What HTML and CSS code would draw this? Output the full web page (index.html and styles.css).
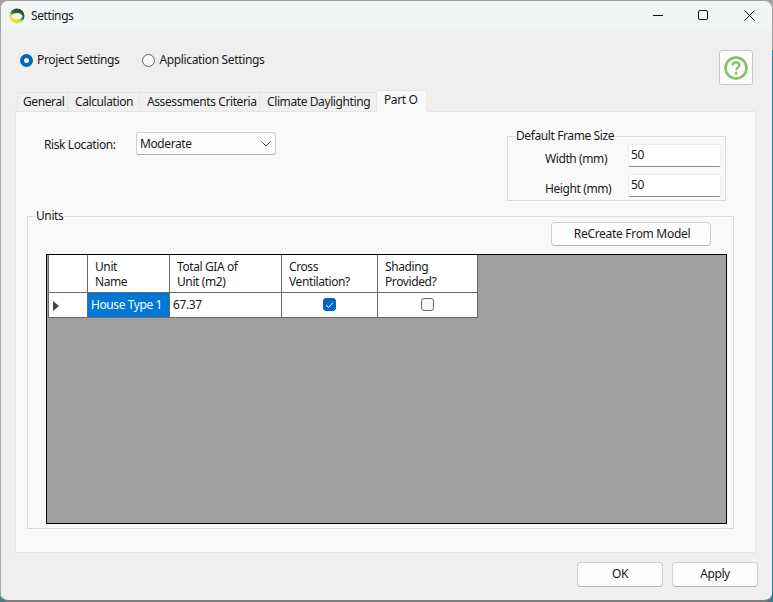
FILE: index.html
```html
<!DOCTYPE html>
<html lang="en">
<head>
<meta charset="utf-8">
<title>Settings</title>
<link rel="stylesheet" href="styles.css">
</head>
<body>
<div class="window">
  <header class="titlebar">
    <svg class="logo" width="16" height="16" viewBox="0 0 16 16">
      <defs>
        <linearGradient id="lg" x1="0.15" y1="0.95" x2="0.7" y2="0.05">
          <stop offset="0" stop-color="#f6f02c"/>
          <stop offset="0.38" stop-color="#d4d838"/>
          <stop offset="0.62" stop-color="#2f6b3c"/>
          <stop offset="1" stop-color="#174a2e"/>
        </linearGradient>
      </defs>
      <circle cx="8" cy="8" r="7.5" fill="url(#lg)"/>
      <ellipse cx="8" cy="8.2" rx="5.4" ry="3.2" fill="#f4f6ee"/>
    </svg>
    <span class="title">Settings</span>
    <div class="controls">
      <svg width="11" height="11" viewBox="0 0 11 11"><path d="M1 5.5H11" stroke="#111" fill="none"/></svg>
      <svg width="11" height="11" viewBox="0 0 11 11"><rect x="0.5" y="0.5" width="9" height="9" rx="1.5" stroke="#111" fill="none"/></svg>
      <svg width="11" height="11" viewBox="0 0 11 11"><path d="M0.5 0.5L10.5 10.5M10.5 0.5L0.5 10.5" stroke="#111" fill="none"/></svg>
    </div>
  </header>
  <main class="body">
    <div class="top">
      <label class="radio"><span class="dot on"></span>Project Settings</label>
      <label class="radio second"><span class="dot"></span>Application Settings</label>
      <button class="help" aria-label="Help">
        <svg width="28" height="28" viewBox="0 0 28 28">
          <circle cx="14" cy="14" r="10.5" fill="none" stroke="#7ec262" stroke-width="2.6"/>
          <path d="M10.6 11.4C10.7 9.4 12.2 8.3 14 8.3C16 8.3 17.4 9.5 17.4 11.2C17.4 13.4 14.2 13.7 14.2 16.2" fill="none" stroke="#7ec262" stroke-width="2.2"/>
          <circle cx="14.2" cy="19.2" r="1.4" fill="#7ec262"/>
        </svg>
      </button>
    </div>
    <nav class="tabs">
      <span class="tab t1">General</span>
      <span class="tab t2">Calculation</span>
      <span class="tab t3">Assessments Criteria</span>
      <span class="tab t4">Climate Daylighting</span>
      <span class="tab active">Part O</span>
    </nav>
    <section class="panel">
      <div class="upper">
        <div class="risk">
          <span class="risk-label">Risk Location:</span>
          <div class="select">
            <span>Moderate</span>
            <svg width="10" height="6" viewBox="0 0 10 6"><path d="M0.5 0.5L5 5L9.5 0.5" stroke="#555" fill="none"/></svg>
          </div>
        </div>
        <fieldset class="frame">
          <legend>Default Frame Size</legend>
          <div class="frow"><span class="flabel">Width (mm)</span><div class="input">50</div></div>
          <div class="frow"><span class="flabel">Height (mm)</span><div class="input">50</div></div>
        </fieldset>
      </div>
      <fieldset class="units">
        <legend>Units</legend>
        <div class="units-bar"><button class="btn recreate">ReCreate From Model</button></div>
        <div class="gridview">
          <div class="grid">
            <div class="cell head"></div>
            <div class="cell head pad8">Unit<br>Name</div>
            <div class="cell head pad8">Total GIA of<br>Unit (m2)</div>
            <div class="cell head pad8">Cross<br>Ventilation?</div>
            <div class="cell head pad8 last">Shading<br>Provided?</div>
            <div class="cell rowhead"><svg width="6" height="10" viewBox="0 0 6 10"><path d="M0 0L6 5L0 10Z" fill="#444"/></svg></div>
            <div class="cell selected">House Type 1</div>
            <div class="cell num">67.37</div>
            <div class="cell check"><span class="box on"><svg width="9" height="8" viewBox="0 0 9 8"><path d="M1 4L3.5 6.5L8 1.5" stroke="#fff" fill="none"/></svg></span></div>
            <div class="cell check last"><span class="box"></span></div>
          </div>
        </div>
      </fieldset>
    </section>
    <footer class="actions">
      <button class="btn action">OK</button>
      <button class="btn action">Apply</button>
    </footer>
  </main>
</div>
</body>
</html>
```

FILE: styles.css
```css
* { box-sizing: border-box; }
html, body { margin: 0; height: 100%; }
body { font: 12px/16px "Noto Sans", sans-serif; letter-spacing: -0.4px; color: #1a1a1a; overflow: hidden; background: linear-gradient(#a3a3a3 50px, #2f7d9c 50px); }
button { font: inherit; letter-spacing: inherit; color: inherit; }

.window {
  width: 772px; height: 602px;
  display: flex; flex-direction: column;
  background: #efefef;
  border-top: 1px solid #9a9a9a;
  border-left: 1px solid #a8a8a8;
  border-bottom: 2px solid #7e7e7e;
  border-radius: 8px;
  overflow: hidden;
}
.titlebar {
  height: 30px; flex: none;
  display: flex; align-items: center;
  padding-left: 8px;
  background: #f2f5f6;
}
.logo { flex: none; margin-top: -1px; }
.title { margin-left: 6px; margin-top: -1px; }
.controls { margin-left: auto; display: flex; gap: 35px; padding-right: 17px; margin-top: -1px; }

.body { flex: 1; display: flex; flex-direction: column; padding: 0 0 0 14px; }

.top { height: 59px; flex: none; width: 741px; display: flex; align-items: flex-start; padding: 19px 3px 0 5px; }
.radio { display: flex; align-items: center; gap: 4px; height: 20px; letter-spacing: -0.35px; }
.second { margin-left: 23px; }
.dot { width: 13px; height: 13px; border-radius: 50%; border: 1px solid #666; background: #f7f7f7; }
.dot.on { border: 4px solid #0067c0; background: #fff; }
.help {
  margin-left: auto; width: 34px; height: 35px; padding: 0;
  display: flex; align-items: center; justify-content: center;
  background: #fdfdfd; border: 1px solid #c9c9c9; border-radius: 3px;
}

.tabs { height: 22px; flex: none; display: flex; align-items: flex-end; padding-left: 2px; position: relative; z-index: 1; margin-bottom: -1px; }
.tab { height: 20px; display: block; padding: 1px 0 0 7px; border: 1px solid #e5e5e5; border-left: 0; background: #f0f0f0; }
.t1 { width: 51px; border-left: 1px solid #e5e5e5; padding-left: 5px; }
.t2 { width: 72px; }
.t3 { width: 120px; }
.t4 { width: 117px; }
.active { width: 50px; height: 22px; background: #f9f9f9; border-bottom-color: #f9f9f9; }

.panel { height: 442px; flex: none; width: 741px; background: #f9f9f9; border: 1px solid #e5e5e5; padding: 0 0 0 11px; }
.upper { height: 96px; display: flex; align-items: flex-start; }
.risk { display: flex; align-items: center; margin: 20px 0 0 17px; }
.risk-label { width: 92px; padding-top: 3px; }
.select {
  width: 140px; height: 23px;
  display: flex; align-items: center; justify-content: space-between;
  padding: 0 4px 0 3px;
  background: #fdfdfd; border: 1px solid #d0d0d0; border-bottom-color: #b0b0b0; border-radius: 3px;
}
.frame {
  margin: 16px 0 0 231px; padding: 0 4px 0 8px; width: 219px; height: 73px;
  border: 1px solid #dcdcdc; min-width: 0;
}
legend { padding: 0 1px; line-height: 16px; margin-left: -1px; }
.frow { display: flex; align-items: center; height: 23px; margin-bottom: 7px; }
.flabel { width: 112px; padding: 7px 0 0 29px; white-space: nowrap; }
.input {
  width: 93px; height: 23px; padding: 1px 2px;
  background: #fff; border: 1px solid #ececec; border-bottom: 1px solid #8a8a8a; border-radius: 2px;
  line-height: 18px;
}

.units { margin: 0; padding: 0 6px 0 18px; width: 707px; height: 321px; border: 1px solid #dcdcdc; min-width: 0; }
.units legend { margin-left: -11px; }
.units-bar { height: 32px; display: flex; justify-content: flex-end; padding: 0 16px 0 0; margin-top: -2px; }
.btn { background: #fdfdfd; border: 1px solid #d0d0d0; border-bottom-color: #b4b4b4; border-radius: 4px; padding: 0; }
.recreate { width: 160px; height: 24px; letter-spacing: -0.3px; padding-left: 2px; }

.gridview { width: 681px; height: 270px; background: #a0a0a0; border: 1px solid #000; padding: 0 0 0 1px; }
.grid { display: grid; grid-template-columns: 39px 82px 112px 96px 100px; grid-template-rows: 38px 25px; width: 429px; background: #fff; border-left: 1px solid #696969; }
.cell { border-right: 1px solid #696969; border-bottom: 1px solid #696969; background: #fff; }
.head { padding: 4px 0 0 0; line-height: 15px; }
.pad8 { padding-left: 7px; }
.rowhead { display: flex; align-items: center; padding: 1px 0 0 4px; }
.selected { background: #0078d7; color: #fff; display: flex; align-items: center; padding-left: 3px; white-space: nowrap; }
.num { display: flex; align-items: center; padding-left: 3px; }
.check { display: flex; align-items: center; justify-content: center; padding-bottom: 1px; }
.box { width: 13px; height: 13px; border: 1px solid #666; border-radius: 3px; background: #f7f7f7; display: flex; align-items: center; justify-content: center; }
.box.on { background: #0067c0; border-color: #0067c0; }

.actions { flex: 1; display: flex; justify-content: flex-end; gap: 9px; padding: 9px 14px 0 0; }
.action { width: 86px; height: 25px; padding-bottom: 1px; }
```
